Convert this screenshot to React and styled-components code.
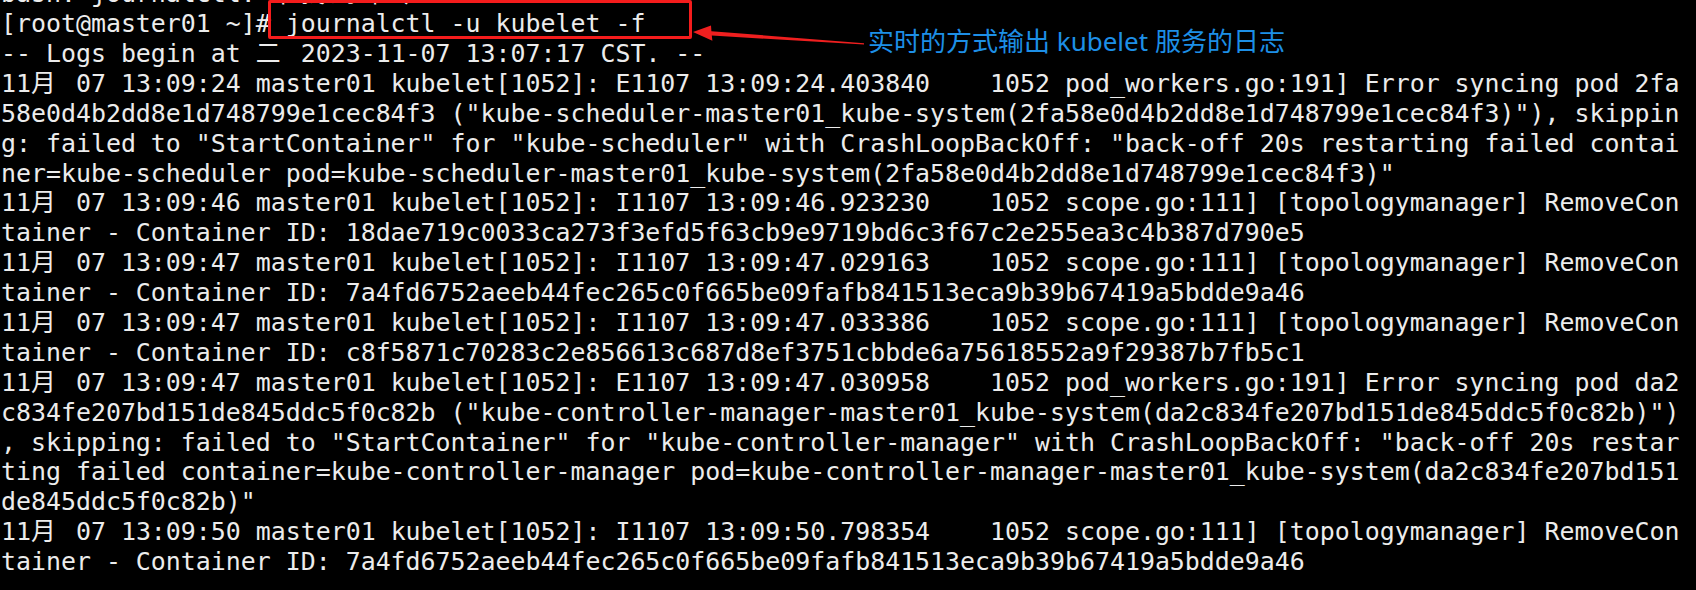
import React from "react";
import styled, { createGlobalStyle } from "styled-components";

const GlobalStyle = createGlobalStyle`
  html, body {
    margin: 0;
    padding: 0;
    background: #000;
    overflow: hidden;
  }
`;

const Screen = styled.div`
  position: relative;
  height: 590px;
  overflow: hidden;
  background: #000;
  display: flex;
  flex-direction: column;
  justify-content: flex-end;
  box-sizing: border-box;
  padding: 0 0 13px 1px;
  font-family: "DejaVu Sans Mono", "Noto Sans CJK SC", monospace;
  font-size: 24.9px;
  line-height: 29.9px;
  color: #ececec;
`;

const Row = styled.div`
  flex-shrink: 0;
  height: 29.9px;
  white-space: pre;
`;

const Wide = styled.span`
  display: inline-block;
  width: 2ch;
  height: 29.9px;
  vertical-align: top;
  overflow: visible;
  font-family: "DejaVu Sans Mono", "Noto Sans CJK SC", monospace;
`;

const CommandBox = styled.div`
  position: absolute;
  left: 268px;
  top: 0;
  width: 424px;
  height: 39px;
  box-sizing: border-box;
  border: 3px solid #f41c1c;
  border-radius: 2px;
  pointer-events: none;
`;

const ArrowLayer = styled.svg`
  position: absolute;
  left: 0;
  top: 0;
  pointer-events: none;
`;

const Note = styled.div`
  position: absolute;
  left: 868px;
  top: 26px;
  font-family: "Noto Sans", "Noto Sans CJK SC", sans-serif;
  font-size: 26px;
  line-height: 30px;
  color: #1d8fe6;
  white-space: nowrap;
`;

const lines = [
  "bash: journalctl: 未找到命令",
  "[root@master01 ~]# journalctl -u kubelet -f",
  "-- Logs begin at 二 2023-11-07 13:07:17 CST. --",
  "11月 07 13:09:24 master01 kubelet[1052]: E1107 13:09:24.403840    1052 pod_workers.go:191] Error syncing pod 2fa",
  "58e0d4b2dd8e1d748799e1cec84f3 (\"kube-scheduler-master01_kube-system(2fa58e0d4b2dd8e1d748799e1cec84f3)\"), skippin",
  "g: failed to \"StartContainer\" for \"kube-scheduler\" with CrashLoopBackOff: \"back-off 20s restarting failed contai",
  "ner=kube-scheduler pod=kube-scheduler-master01_kube-system(2fa58e0d4b2dd8e1d748799e1cec84f3)\"",
  "11月 07 13:09:46 master01 kubelet[1052]: I1107 13:09:46.923230    1052 scope.go:111] [topologymanager] RemoveCon",
  "tainer - Container ID: 18dae719c0033ca273f3efd5f63cb9e9719bd6c3f67c2e255ea3c4b387d790e5",
  "11月 07 13:09:47 master01 kubelet[1052]: I1107 13:09:47.029163    1052 scope.go:111] [topologymanager] RemoveCon",
  "tainer - Container ID: 7a4fd6752aeeb44fec265c0f665be09fafb841513eca9b39b67419a5bdde9a46",
  "11月 07 13:09:47 master01 kubelet[1052]: I1107 13:09:47.033386    1052 scope.go:111] [topologymanager] RemoveCon",
  "tainer - Container ID: c8f5871c70283c2e856613c687d8ef3751cbbde6a75618552a9f29387b7fb5c1",
  "11月 07 13:09:47 master01 kubelet[1052]: E1107 13:09:47.030958    1052 pod_workers.go:191] Error syncing pod da2",
  "c834fe207bd151de845ddc5f0c82b (\"kube-controller-manager-master01_kube-system(da2c834fe207bd151de845ddc5f0c82b)\")",
  ", skipping: failed to \"StartContainer\" for \"kube-controller-manager\" with CrashLoopBackOff: \"back-off 20s restar",
  "ting failed container=kube-controller-manager pod=kube-controller-manager-master01_kube-system(da2c834fe207bd151",
  "de845ddc5f0c82b)\"",
  "11月 07 13:09:50 master01 kubelet[1052]: I1107 13:09:50.798354    1052 scope.go:111] [topologymanager] RemoveCon",
  "tainer - Container ID: 7a4fd6752aeeb44fec265c0f665be09fafb841513eca9b39b67419a5bdde9a46",
];

const CJK = /([\u3000-\u9fff])/;

function TermLine({ text }) {
  const parts = text.split(CJK).filter((p) => p !== "");
  return (
    <Row>
      {parts.map((p, i) =>
        CJK.test(p) && p.length === 1 ? <Wide key={i}>{p}</Wide> : <React.Fragment key={i}>{p}</React.Fragment>
      )}
    </Row>
  );
}

export default function App() {
  return (
    <>
      <GlobalStyle />
      <Screen>
        {lines.map((l, i) => (
          <TermLine key={i} text={l} />
        ))}
        <CommandBox />
        <ArrowLayer width="1696" height="80" viewBox="0 0 1696 80">
          <polygon
            points="693,32 711,25.5 711.4,31.2 864,43.2 864,44.6 711.8,35.6 712.4,40.8"
            fill="#ef1f1f"
          />
        </ArrowLayer>
        <Note>实时的方式输出 kubelet 服务的日志</Note>
      </Screen>
    </>
  );
}
